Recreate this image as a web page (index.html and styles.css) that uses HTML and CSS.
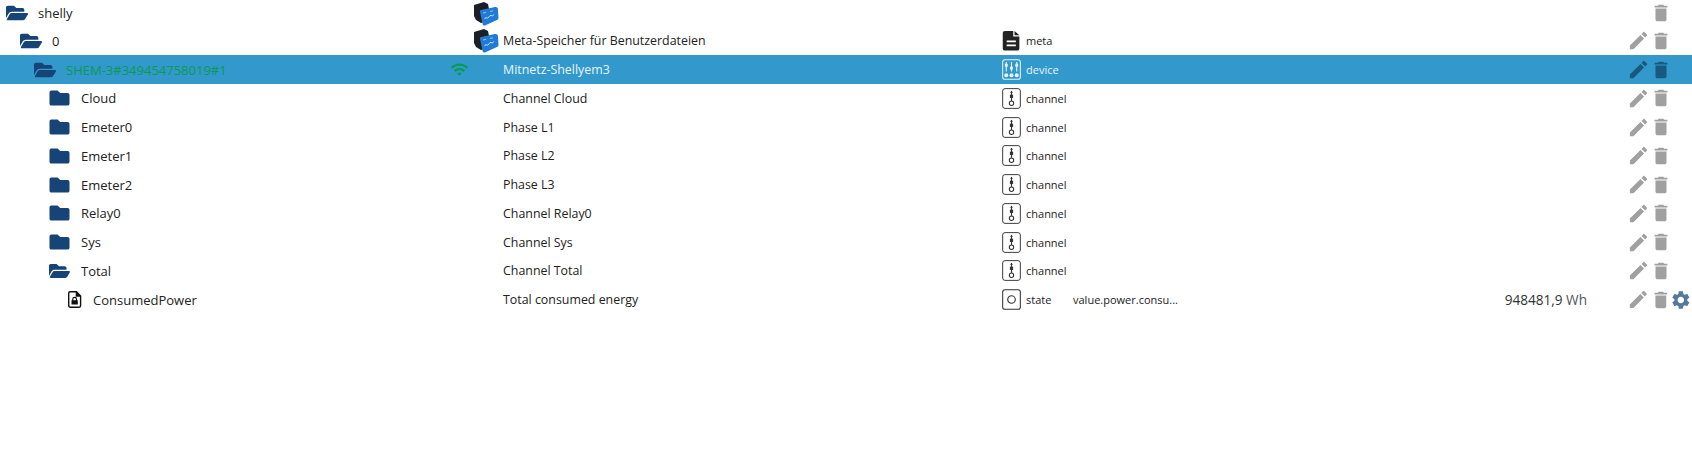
FILE: index.html
```html
<!DOCTYPE html>
<html lang="de">
<head>
  <meta charset="UTF-8" />
  <title>Objekte</title>
  <link rel="stylesheet" href="styles.css">
</head>
<body>
  <svg class="sprite" xmlns="http://www.w3.org/2000/svg">
    <symbol id="i-open" viewBox="0 0 576 512"><path d="M572.694 292.093L500.27 416.248A63.997 63.997 0 0 1 444.989 448H45.025c-18.523 0-30.064-20.093-20.731-36.093l72.424-124.155A64 64 0 0 1 152 256h399.964c18.523 0 30.064 20.093 20.73 36.093zM152 224h328v-48c0-26.51-21.49-48-48-48H272l-64-64H48C21.49 64 0 85.49 0 112v278.046l69.077-118.418C86.214 242.25 117.989 224 152 224z"/></symbol>
    <symbol id="i-folder" viewBox="0 0 512 512"><path d="M464 128H272l-64-64H48C21.49 64 0 85.49 0 112v288c0 26.51 21.49 48 48 48h416c26.51 0 48-21.49 48-48V176c0-26.51-21.49-48-48-48z"/></symbol>
    <symbol id="i-edit" viewBox="0 0 24 24"><path d="M3 17.25V21h3.75L17.81 9.94l-3.75-3.75L3 17.25zM20.71 7.04c.39-.39.39-1.02 0-1.41l-2.34-2.34c-.39-.39-1.02-.39-1.41 0l-1.83 1.83 3.75 3.75 1.83-1.83z"/></symbol>
    <symbol id="i-del" viewBox="0 0 24 24"><path d="M6 19c0 1.1.9 2 2 2h8c1.1 0 2-.9 2-2V7H6v12zM19 4h-3.5l-1-1h-5l-1 1H5v2h14V4z"/></symbol>
    <symbol id="i-gear" viewBox="0 0 24 24"><path d="M19.14 12.94c.04-.3.06-.61.06-.94 0-.32-.02-.64-.07-.94l2.03-1.58c.18-.14.23-.41.12-.61l-1.92-3.32c-.12-.22-.37-.29-.59-.22l-2.39.96c-.5-.38-1.03-.7-1.62-.94l-.36-2.54c-.04-.24-.24-.41-.48-.41h-3.84c-.24 0-.43.17-.47.41l-.36 2.54c-.59.24-1.13.57-1.62.94l-2.39-.96c-.22-.08-.47 0-.59.22L2.74 8.87c-.12.21-.08.47.12.61l2.03 1.58c-.05.3-.09.63-.09.94s.02.64.07.94l-2.03 1.58c-.18.14-.23.41-.12.61l1.92 3.32c.12.22.37.29.59.22l2.39-.96c.5.38 1.03.7 1.62.94l.36 2.54c.05.24.24.41.48.41h3.84c.24 0 .44-.17.47-.41l.36-2.54c.59-.24 1.13-.56 1.62-.94l2.39.96c.22.08.47 0 .59-.22l1.92-3.32c.12-.22.07-.47-.12-.61l-2.01-1.58zM12 15.6c-1.98 0-3.6-1.62-3.6-3.6s1.62-3.6 3.6-3.6 3.6 1.62 3.6 3.6-1.62 3.6-3.6 3.6z"/></symbol>
    <symbol id="i-wifi" viewBox="0 0 24 24"><path d="M1 9l2 2c4.97-4.97 13.03-4.97 18 0l2-2C16.93 2.93 7.08 2.93 1 9zm8 8l3 3 3-3c-1.65-1.66-4.34-1.66-6 0zm-4-4l2 2c2.76-2.76 7.24-2.76 10 0l2-2C15.14 9.14 8.87 9.14 5 13z"/></symbol>
    <symbol id="i-shelly" viewBox="0 0 26 25">
      <path fill="#1c1f24" d="M1 4 11 1l4 2 1 5-6 7 1 6-3 1-5-3-2-4z"/>
      <path fill="#1f7bd6" d="M8 9 22 6c1.500-.3 2.700.5 2.900 1.800l.6 9.200c0 1-.6 1.800-1.600 2.100L12 24.500c-1.200.3-2.200-.3-2.400-1.500L7 11c-.2-1 .1-1.800 1-2z"/>
      <path fill="none" stroke="#d6eafb" stroke-width="1" d="M11.500 18c1.500-2.500 2.500-.5 3.500-1s1.500-3 3-2.500 1.500.5 3-1"/>
      <path fill="#8cc2ee" d="M10 11.500l3-.7.2 1-3 .7zM17 10l3-.7.2 1-3 .7z"/>
    </symbol>
    <symbol id="i-meta" viewBox="0 0 20 24"><path d="M2.500 1H12v6.500h7V21a2.500 2.500 0 0 1-2.500 2.500h-14A2.500 2.500 0 0 1 0 21V3.500A2.500 2.500 0 0 1 2.500 1zM13.500 1 19 6h-5.500zM4.500 12v2H15v-2zM4.500 16.500v2H15v-2z" fill-rule="evenodd"/></symbol>
    <symbol id="i-lock" viewBox="0 0 20 24"><path fill-rule="evenodd" d="M3 0h9.500L19 6.500V21a3 3 0 0 1-3 3H3a3 3 0 0 1-3-3V3a3 3 0 0 1 3-3zM2 3v18a1 1 0 0 0 1 1h13a1 1 0 0 0 1-1V8h-6V2H3a1 1 0 0 0-1 1zM6 13v-1.500a3.500 3.500 0 0 1 7 0V13h1v6H5v-6zm1.700 0h3.600v-1.500a1.800 1.800 0 0 0-3.600 0z"/></symbol>
    <symbol id="i-channel" viewBox="0 0 20 22" fill="none" stroke="currentColor">
      <rect x=".7" y=".6" width="18.600" height="20.800" rx="2.500" stroke-width="1"/>
      <path d="M10 3v10.500" stroke-width="1.200"/>
      <path d="M8.500 5 10 3l1.500 2z" fill="currentColor" stroke="none"/>
      <rect x="8.300" y="7" width="3.400" height="3.400" fill="currentColor" stroke="none"/>
      <circle cx="10" cy="16" r="2.300" stroke-width="1.100"/>
    </symbol>
    <symbol id="i-device" viewBox="0 0 20 22" fill="none" stroke="currentColor">
      <rect x=".7" y=".7" width="18.600" height="20.600" rx="2.500" stroke-width="1.100"/>
      <path d="M4.500 3v10M10 3v10M15.500 3v10" stroke-width="1.200"/>
      <path d="M3 5h3v3H3zM8.500 8h3v3h-3zM14 5h3v3h-3z" fill="currentColor" stroke="none"/>
      <circle cx="4.500" cy="17" r="2.100" fill="currentColor" stroke="none"/>
      <circle cx="10" cy="17" r="2.100" fill="currentColor" stroke="none"/>
      <circle cx="15.500" cy="17" r="2.100" fill="currentColor" stroke="none"/>
    </symbol>
    <symbol id="i-state" viewBox="0 0 20 22" fill="none" stroke="currentColor">
      <rect x=".7" y=".7" width="18.600" height="20.600" rx="2.500" stroke-width="1.100"/>
      <circle cx="10" cy="11" r="4" stroke-width="1.200"/>
    </symbol>
  </svg>

  <div class="tree">
    <div class="row row-first">
      <div class="name"><svg class="ic-folder"><use href="#i-open"/></svg><span>shelly</span></div>
      <div class="logo"><svg class="ic-logo"><use href="#i-shelly"/></svg></div>
      <div class="desc"></div>
      <div class="type"></div>
      <div class="role"></div>
      <div class="val"></div>
      <div class="actions"><span class="slot"></span><svg class="ic-del"><use href="#i-del"/></svg></div>
    </div>

    <div class="row">
      <div class="name lvl1"><svg class="ic-folder"><use href="#i-open"/></svg><span>0</span></div>
      <div class="logo"><svg class="ic-logo"><use href="#i-shelly"/></svg></div>
      <div class="desc">Meta-Speicher für Benutzerdateien</div>
      <div class="type"><svg class="ic-type"><use href="#i-meta"/></svg><span>meta</span></div>
      <div class="role"></div>
      <div class="val"></div>
      <div class="actions"><svg class="ic-edit"><use href="#i-edit"/></svg><svg class="ic-del"><use href="#i-del"/></svg></div>
    </div>

    <div class="row selected">
      <div class="name lvl2"><svg class="ic-folder"><use href="#i-open"/></svg><span class="online">SHEM-3#349454758019#1</span><svg class="ic-wifi"><use href="#i-wifi"/></svg></div>
      <div class="logo"></div>
      <div class="desc">Mitnetz-Shellyem3</div>
      <div class="type"><svg class="ic-type"><use href="#i-device"/></svg><span>device</span></div>
      <div class="role"></div>
      <div class="val"></div>
      <div class="actions"><svg class="ic-edit"><use href="#i-edit"/></svg><svg class="ic-del"><use href="#i-del"/></svg></div>
    </div>

    <div class="row">
      <div class="name lvl3"><svg class="ic-folder closed"><use href="#i-folder"/></svg><span>Cloud</span></div>
      <div class="logo"></div>
      <div class="desc">Channel Cloud</div>
      <div class="type"><svg class="ic-type"><use href="#i-channel"/></svg><span>channel</span></div>
      <div class="role"></div>
      <div class="val"></div>
      <div class="actions"><svg class="ic-edit"><use href="#i-edit"/></svg><svg class="ic-del"><use href="#i-del"/></svg></div>
    </div>

    <div class="row">
      <div class="name lvl3"><svg class="ic-folder closed"><use href="#i-folder"/></svg><span>Emeter0</span></div>
      <div class="logo"></div>
      <div class="desc">Phase L1</div>
      <div class="type"><svg class="ic-type"><use href="#i-channel"/></svg><span>channel</span></div>
      <div class="role"></div>
      <div class="val"></div>
      <div class="actions"><svg class="ic-edit"><use href="#i-edit"/></svg><svg class="ic-del"><use href="#i-del"/></svg></div>
    </div>

    <div class="row">
      <div class="name lvl3"><svg class="ic-folder closed"><use href="#i-folder"/></svg><span>Emeter1</span></div>
      <div class="logo"></div>
      <div class="desc">Phase L2</div>
      <div class="type"><svg class="ic-type"><use href="#i-channel"/></svg><span>channel</span></div>
      <div class="role"></div>
      <div class="val"></div>
      <div class="actions"><svg class="ic-edit"><use href="#i-edit"/></svg><svg class="ic-del"><use href="#i-del"/></svg></div>
    </div>

    <div class="row">
      <div class="name lvl3"><svg class="ic-folder closed"><use href="#i-folder"/></svg><span>Emeter2</span></div>
      <div class="logo"></div>
      <div class="desc">Phase L3</div>
      <div class="type"><svg class="ic-type"><use href="#i-channel"/></svg><span>channel</span></div>
      <div class="role"></div>
      <div class="val"></div>
      <div class="actions"><svg class="ic-edit"><use href="#i-edit"/></svg><svg class="ic-del"><use href="#i-del"/></svg></div>
    </div>

    <div class="row">
      <div class="name lvl3"><svg class="ic-folder closed"><use href="#i-folder"/></svg><span>Relay0</span></div>
      <div class="logo"></div>
      <div class="desc">Channel Relay0</div>
      <div class="type"><svg class="ic-type"><use href="#i-channel"/></svg><span>channel</span></div>
      <div class="role"></div>
      <div class="val"></div>
      <div class="actions"><svg class="ic-edit"><use href="#i-edit"/></svg><svg class="ic-del"><use href="#i-del"/></svg></div>
    </div>

    <div class="row">
      <div class="name lvl3"><svg class="ic-folder closed"><use href="#i-folder"/></svg><span>Sys</span></div>
      <div class="logo"></div>
      <div class="desc">Channel Sys</div>
      <div class="type"><svg class="ic-type"><use href="#i-channel"/></svg><span>channel</span></div>
      <div class="role"></div>
      <div class="val"></div>
      <div class="actions"><svg class="ic-edit"><use href="#i-edit"/></svg><svg class="ic-del"><use href="#i-del"/></svg></div>
    </div>

    <div class="row">
      <div class="name lvl3"><svg class="ic-folder closed"><use href="#i-open"/></svg><span>Total</span></div>
      <div class="logo"></div>
      <div class="desc">Channel Total</div>
      <div class="type"><svg class="ic-type"><use href="#i-channel"/></svg><span>channel</span></div>
      <div class="role"></div>
      <div class="val"></div>
      <div class="actions"><svg class="ic-edit"><use href="#i-edit"/></svg><svg class="ic-del"><use href="#i-del"/></svg></div>
    </div>

    <div class="row">
      <div class="name lvl4"><svg class="ic-file"><use href="#i-lock"/></svg><span>ConsumedPower</span></div>
      <div class="logo"></div>
      <div class="desc">Total consumed energy</div>
      <div class="type"><svg class="ic-type"><use href="#i-state"/></svg><span>state</span></div>
      <div class="role">value.power.consu...</div>
      <div class="val">948481,9 <span class="unit">Wh</span></div>
      <div class="actions"><svg class="ic-edit"><use href="#i-edit"/></svg><svg class="ic-del"><use href="#i-del"/></svg><svg class="ic-gear"><use href="#i-gear"/></svg></div>
    </div>
  </div>
</body>
</html>
```

FILE: styles.css
```css
body {
  margin: 0;
  background: #fff;
  color: #222;
  font-family: "Open Sans", sans-serif;
  font-size: 12.4px;
  overflow: hidden;
}

.sprite {
  display: none;
}

.row {
  display: grid;
  grid-template-columns: 473px 30px 497px 73px 330px 184px 105px;
  align-items: center;
  height: 28.75px;
}

.row-first {
  height: 26.5px;
}

.name {
  display: flex;
  align-items: center;
  padding-left: 6px;
  font-size: 13px;
}

.name span {
  margin-left: 10px;
}

.lvl1 { padding-left: 20px; }
.lvl2 { padding-left: 34px; }
.lvl3 { padding-left: 49px; }
.lvl4 { padding-left: 68px; }

.ic-folder {
  width: 22px;
  height: 20px;
  fill: #164477;
}

.ic-folder.closed {
  width: 21px;
}

.lvl3 span {
  margin-left: 11px;
}

.ic-file {
  width: 14px;
  height: 19px;
  fill: #111;
}

.lvl4 span {
  margin-left: 11px;
}

.online {
  color: #0b9a4f;
}

.ic-wifi {
  width: 19px;
  height: 19px;
  margin-left: auto;
  margin-right: 4px;
  fill: #0b9a4f;
}

.logo {
  display: flex;
  align-items: center;
}

.ic-logo {
  width: 26px;
  height: 25px;
}

.desc {
  white-space: nowrap;
}

.type {
  display: flex;
  align-items: center;
  gap: 5px;
  font-size: 11px;
  padding-left: 2px;
}

.ic-type {
  width: 19px;
  height: 21px;
  fill: #222;
  color: #333;
}

.role {
  font-size: 11px;
  white-space: nowrap;
}

.val {
  text-align: right;
  font-size: 13.6px;
  color: #333;
}

.unit {
  color: #555;
}

.actions {
  display: flex;
  align-items: center;
  padding-left: 40px;
}

.slot {
  width: 23px;
}

.ic-edit {
  width: 23px;
  height: 23px;
  fill: #a0a0a0;
}

.ic-del {
  width: 22px;
  height: 22px;
  fill: #a0a0a0;
}

.ic-gear {
  width: 22px;
  height: 22px;
  margin-left: -1px;
  fill: #55789f;
}

.selected {
  background: #3399cc;
  color: #e6f5fc;
}

.selected .ic-type {
  color: #e6f5fc;
}

.selected .ic-edit,
.selected .ic-del {
  fill: #17597f;
}
```
